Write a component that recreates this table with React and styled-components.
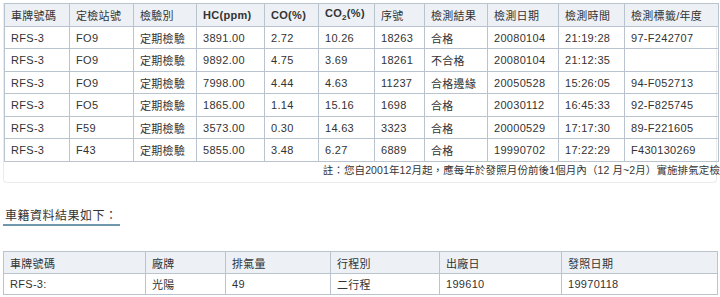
import React from "react";
import styled, { createGlobalStyle } from "styled-components";

const Global = createGlobalStyle`
  html, body { margin: 0; padding: 0; background: #fff; }
  body { font-family: "Liberation Sans", Arial, "Noto Sans CJK TC", sans-serif; color: #333; }
`;

const Page = styled.div`
  width: 720px;
  height: 297px;
  overflow: hidden;
  padding: 3px 3px 0 3px;
  box-sizing: border-box;
`;

const Panel = styled.div`
  border: 1px solid #ececec;
  border-top: none;
  border-radius: 0 0 4px 4px;
  padding-bottom: 4px;
`;

const Table = styled.table`
  border-collapse: collapse;
  table-layout: fixed;
  width: 714px;
  font-size: 11px;
`;

const Th = styled.th`
  background: #edf1f5;
  border: 1px solid #b9c4ce;
  text-align: left;
  font-weight: ${(p) => (p.$bold ? "bold" : "normal")};
  padding: 0 6px;
  height: ${(p) => p.$h || 21}px;
  white-space: nowrap;
  letter-spacing: 0.3px;
`;

const Td = styled.td`
  border: 1px solid #b9c4ce;
  padding: 0 6px;
  height: ${(p) => p.$h || 21}px;
  white-space: nowrap;
  letter-spacing: 0.3px;
`;

const Sub = styled.sub`
  font-size: 8px;
`;

const NoteRow = styled.div`
  display: flex;
  justify-content: flex-end;
  margin-right: -4px;
  margin-top: 0;
  height: 16px;
  overflow: hidden;
`;

const Note = styled.div`
  font-size: 10.5px;
  line-height: 16px;
  white-space: nowrap;
  letter-spacing: 0.1px;
`;

const Heading = styled.div`
  margin: 25px 0 0 0;
  font-size: 12px;
  letter-spacing: 0.5px;
  display: inline-block;
  border-bottom: 2px solid #6f97ad;
  line-height: 16px;
  padding: 0 2px;
`;

const Spacer = styled.div`
  height: 25px;
`;

const rows = [
  ["RFS-3", "FO9", "定期檢驗", "3891.00", "2.72", "10.26", "18263", "合格", "20080104", "21:19:28", "97-F242707"],
  ["RFS-3", "FO9", "定期檢驗", "9892.00", "4.75", "3.69", "18261", "不合格", "20080104", "21:12:35", ""],
  ["RFS-3", "FO9", "定期檢驗", "7998.00", "4.44", "4.63", "11237", "合格邊緣", "20050528", "15:26:05", "94-F052713"],
  ["RFS-3", "FO5", "定期檢驗", "1865.00", "1.14", "15.16", "1698", "合格", "20030112", "16:45:33", "92-F825745"],
  ["RFS-3", "F59", "定期檢驗", "3573.00", "0.30", "14.63", "3323", "合格", "20000529", "17:17:30", "89-F221605"],
  ["RFS-3", "F43", "定期檢驗", "5855.00", "3.48", "6.27", "6889", "合格", "19990702", "17:22:29", "F430130269"],
];

const widths1 = [65, 64, 63, 68, 54, 56, 50, 63, 71, 66, 94];
const widths2 = [142, 80, 105, 109, 122, 156];

export default function App() {
  return (
    <>
      <Global />
      <Page>
        <Panel>
          <Table>
            <colgroup>
              {widths1.map((w, i) => (
                <col key={i} style={{ width: w }} />
              ))}
            </colgroup>
            <thead>
              <tr>
                <Th $h={22}>車牌號碼</Th>
                <Th $h={22}>定檢站號</Th>
                <Th $h={22}>檢驗別</Th>
                <Th $h={22} $bold>HC(ppm)</Th>
                <Th $h={22} $bold>CO(%)</Th>
                <Th $h={22} $bold>
                  CO<Sub>2</Sub>(%)
                </Th>
                <Th $h={22}>序號</Th>
                <Th $h={22}>檢測結果</Th>
                <Th $h={22}>檢測日期</Th>
                <Th $h={22}>檢測時間</Th>
                <Th $h={22}>檢測標籤/年度</Th>
              </tr>
            </thead>
            <tbody>
              {rows.map((r, i) => (
                <tr key={i}>
                  {r.map((c, j) => (
                    <Td key={j} $h={i % 2 === 1 ? 22 : 21}>
                      {c}
                    </Td>
                  ))}
                </tr>
              ))}
            </tbody>
          </Table>
          <NoteRow>
            <Note>註：您自2001年12月起，應每年於發照月份前後1個月內（12 月~2月）實施排氣定檢</Note>
          </NoteRow>
        </Panel>
        <Heading>車籍資料結果如下：</Heading>
        <Spacer />
        <Table>
          <colgroup>
            {widths2.map((w, i) => (
              <col key={i} style={{ width: w }} />
            ))}
          </colgroup>
          <thead>
            <tr>
              <Th $h={21}>車牌號碼</Th>
              <Th $h={21}>廠牌</Th>
              <Th $h={21}>排氣量</Th>
              <Th $h={21}>行程別</Th>
              <Th $h={21}>出廠日</Th>
              <Th $h={21}>發照日期</Th>
            </tr>
          </thead>
          <tbody>
            <tr>
              <Td $h={20}>RFS-3:</Td>
              <Td $h={20}>光陽</Td>
              <Td $h={20}>49</Td>
              <Td $h={20}>二行程</Td>
              <Td $h={20}>199610</Td>
              <Td $h={20}>19970118</Td>
            </tr>
          </tbody>
        </Table>
      </Page>
    </>
  );
}
